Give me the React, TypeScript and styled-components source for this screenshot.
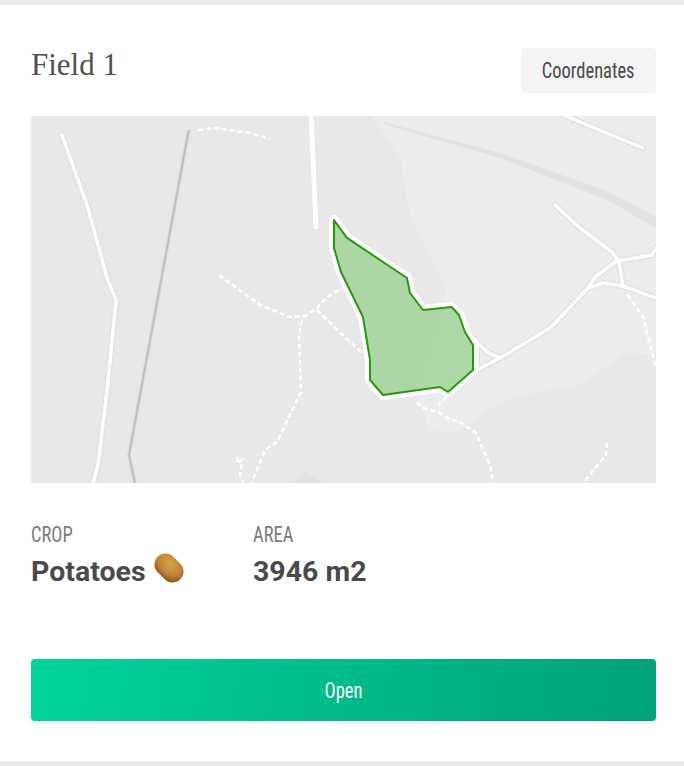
import React from 'react';
import styled, { createGlobalStyle } from 'styled-components';

const GlobalStyle = createGlobalStyle`
  html, body {
    margin: 0;
    padding: 0;
    background: #ffffff;
  }
`;

const narrow = `"Roboto Condensed", "Liberation Sans Narrow", "Liberation Sans", sans-serif`;

const roads = [
  '62,135 88,208 107,278 116,300 108,382 98,465 93,483',
  '563,115 643,148',
  '555,205 580,228 612,252 618,260 595,277 588,288 550,328 500,358 473,372',
  '618,261 652,255 656,248',
  '619,262 623,286 656,298',
  '588,288 603,283 623,286',
  '473,338 487,352 500,358',
  '477,345 477,368',
];

const paths = [
  '198,130 215,128 250,133 270,139',
  '219,275 260,305 290,317 305,316 317,308 327,297 342,288',
  '317,310 350,342 362,353',
  '302,320 299,335 301,392 277,442 265,450 252,482',
  '238,457 237,463 242,460 240,475 243,482',
  '628,295 643,317 656,368',
  '417,402 423,408 438,412 447,418 460,422 475,432 490,465 493,483',
  '447,397 439,403 439,410',
  '607,443 606,455 587,478 585,483',
];

const fieldOutline =
  '334,220 346.7,237.7 407,278 410,293 423,310 451.7,307 459,315 465,332 473,345 473,370 448,392 440,387 383,395 370,380 370,360 363,317 341,272 334,248';

const Card = styled.div`
  width: 684px;
  height: 766px;
  box-sizing: border-box;
  border-top: 5px solid #e9e9e9;
  border-bottom: 5px solid #e9e9e9;
  padding: 43px 28px 0 31px;
  background: #ffffff;
`;

const Header = styled.div`
  display: flex;
  justify-content: space-between;
  align-items: flex-start;
  height: 68px;
`;

const Title = styled.h2`
  margin: 0;
  font-family: "Liberation Serif", serif;
  font-weight: 400;
  font-size: 31px;
  line-height: 34px;
  color: #505050;
`;

const Condensed = styled.span<{ $origin?: string }>`
  display: inline-block;
  transform: scaleX(0.84);
  transform-origin: ${(p) => p.$origin || 'center'};
`;

const GhostButton = styled.button`
  width: 135px;
  height: 45px;
  border: none;
  border-radius: 4px;
  background: #f4f4f4;
  color: #4a4a4a;
  font-family: ${narrow};
  font-size: 22px;
  padding: 0;
`;

const MapBox = styled.div`
  height: 367px;
  background: #e8e8e8;
  overflow: hidden;
`;

const MapSvg = styled.svg`
  display: block;
  width: 100%;
  height: 100%;
`;

const Stats = styled.div`
  display: flex;
  margin-top: 39px;
  height: 137px;
`;

const Stat = styled.div<{ $width: number }>`
  width: ${(p) => p.$width}px;
`;

const Label = styled.div`
  font-family: ${narrow};
  font-size: 22px;
  line-height: 26px;
  color: #7a7a7a;
`;

const Value = styled.div`
  display: flex;
  align-items: center;
  gap: 8px;
  margin-top: 8px;
  height: 32px;
  font-family: Roboto, "Liberation Sans", sans-serif;
  font-weight: 700;
  font-size: 28.5px;
  line-height: 32px;
  color: #4a4a4a;
`;

const PotatoIcon = styled.svg`
  flex: none;
  margin-top: -8px;
`;

const PrimaryButton = styled.button`
  display: block;
  width: 100%;
  height: 62px;
  border: none;
  border-radius: 4px;
  background: linear-gradient(100deg, #00d299 4%, #00a37a 96%);
  color: #ffffff;
  font-family: ${narrow};
  font-size: 22px;
  padding: 0;
`;

const Potato = () => (
  <PotatoIcon width="30" height="30" viewBox="0 0 30 30">
    <defs>
      <radialGradient id="potato" cx="0.42" cy="0.34" r="0.72">
        <stop offset="0%" stopColor="#d8a14c" />
        <stop offset="60%" stopColor="#bf8434" />
        <stop offset="100%" stopColor="#83541d" />
      </radialGradient>
    </defs>
    <rect x="-1" y="4" width="32" height="22" rx="11" transform="rotate(45 15 15)" fill="url(#potato)" />
  </PotatoIcon>
);

const FieldMap = () => (
  <MapSvg viewBox="31 116 625 367">
    <polygon fill="#ececec" points="372,116 400,158 410,218 447,288 413,388 430,430 457,433 490,408 523,395 580,385 627,353 656,355 656,116" />
    <polygon fill="#e3e3e3" points="288,483 305,472 323,482 323,483" />
    <polygon fill="#e2e2e2" points="384,122 500,153 607,191 656,217 656,228 607,200 500,158 386,125" />

    <g fill="none" stroke="#e0e0e0" strokeWidth="6" strokeLinecap="round" strokeLinejoin="round">
      {roads.map((points) => (
        <polyline key={points} points={points} />
      ))}
      <polyline points="311,112 316,227" />
    </g>
    <g fill="none" stroke="#ffffff" strokeWidth="3.5" strokeLinecap="round" strokeLinejoin="round">
      {roads.map((points) => (
        <polyline key={points} points={points} />
      ))}
      <polyline strokeWidth="5" points="311,112 316,227" />
    </g>
    <polyline fill="none" stroke="#d6d6d6" strokeWidth="3.5" points="188.7,130 129,455 135,483" />
    <polyline fill="none" stroke="#bcbcbc" strokeWidth="1.5" points="188.7,130 129,455 135,483" />

    <g fill="none" stroke="#ffffff" strokeWidth="2.5" strokeDasharray="5 3">
      {paths.map((points) => (
        <polyline key={points} points={points} />
      ))}
    </g>

    <polygon fill="none" stroke="#ffffff" strokeWidth="10" strokeLinejoin="round" points={fieldOutline} />
    <polygon fill="#e8e8e8" points={fieldOutline} />
    <clipPath id="field-clip">
      <polygon points={fieldOutline} />
    </clipPath>
    <polygon fill="#eaeaea" points="447,288 413,388 473,390 480,300" clipPath="url(#field-clip)" />
    <polygon
      fill="#25ac0c"
      fillOpacity="0.3"
      stroke="#259b0c"
      strokeWidth="2"
      strokeLinejoin="round"
      points={fieldOutline}
    />
  </MapSvg>
);

export default function App() {
  return (
    <>
      <GlobalStyle />
      <Card>
        <Header>
          <Title>Field 1</Title>
          <GhostButton>
            <Condensed>Coordenates</Condensed>
          </GhostButton>
        </Header>
        <MapBox>
          <FieldMap />
        </MapBox>
        <Stats>
          <Stat $width={222}>
            <Label>
              <Condensed $origin="left">CROP</Condensed>
            </Label>
            <Value>
              Potatoes <Potato />
            </Value>
          </Stat>
          <Stat $width={200}>
            <Label>
              <Condensed $origin="left">AREA</Condensed>
            </Label>
            <Value>3946 m2</Value>
          </Stat>
        </Stats>
        <PrimaryButton>
          <Condensed>Open</Condensed>
        </PrimaryButton>
      </Card>
    </>
  );
}
